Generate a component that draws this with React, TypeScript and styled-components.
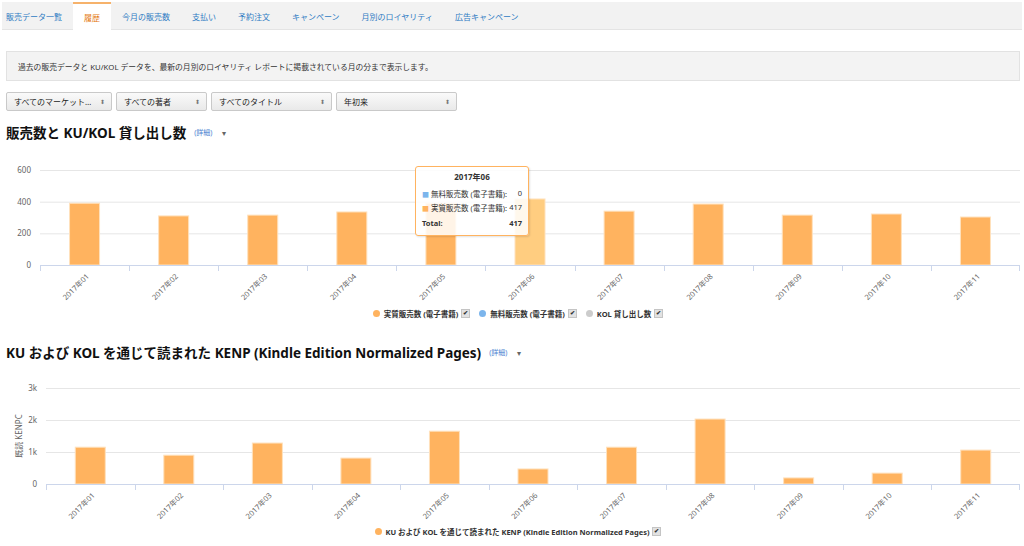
import React from 'react';
import styled, { createGlobalStyle } from 'styled-components';

const GlobalStyle = createGlobalStyle`
  html, body {
    margin: 0;
    padding: 0;
    background: #ffffff;
    font-family: "Noto Sans", "Noto Sans CJK JP", sans-serif;
    color: #333;
  }
`;

const tabs = ['販売データ一覧', '履歴', '今月の販売数', '支払い', '予約注文', 'キャンペーン', '月別のロイヤリティ', '広告キャンペーン'];
const months = ['01', '02', '03', '04', '05', '06', '07', '08', '09', '10', '11'].map(m => `2017年${m}`);
const salesData = [390, 310, 315, 335, 390, 417, 340, 385, 315, 322, 303];
const kenpData = [1150, 900, 1280, 810, 1650, 470, 1150, 2030, 190, 340, 1060];

interface ChartProps {
  values: number[];
  max: number;
  ticks: string[];
  height: number;
  plotTop: number;
  plotBottom: number;
  plotLeft: number;
  plotRight: number;
  labelX: number;
  yTitle?: string;
  highlight?: number;
}

function BarChart(props: ChartProps) {
  const { values, max, ticks, height, plotTop, plotBottom, plotLeft, plotRight, labelX, yTitle, highlight } = props;
  const step = (plotRight - plotLeft) / values.length;
  const plotH = plotBottom - plotTop;

  return (
    <ChartSvg width={1024} height={height} viewBox={`0 0 1024 ${height}`}>
      {ticks.map((t, i) => {
        const y = plotBottom - (plotH * i) / (ticks.length - 1);
        return (
          <g key={t}>
            {i > 0 && <line x1={plotLeft} x2={plotRight} y1={y + 0.5} y2={y + 0.5} stroke="#e6e6e6" />}
            <text x={labelX} y={y + 3} textAnchor="end" fontSize="8" fill="#666">
              {t}
            </text>
          </g>
        );
      })}
      {yTitle && (
        <text
          x={0}
          y={0}
          fontSize="8"
          fill="#666"
          textAnchor="middle"
          transform={`translate(22 ${(plotTop + plotBottom) / 2}) rotate(-90)`}
        >
          {yTitle}
        </text>
      )}
      {values.map((v, i) => {
        const cx = plotLeft + step * i + step / 2;
        const h = (v / max) * plotH;
        return (
          <rect
            key={i}
            x={cx - 15}
            y={plotBottom - h}
            width={30}
            height={h}
            fill={highlight === i ? '#ffcd80' : '#ffb35f'}
            stroke="#ffe1bd"
            strokeWidth={1}
          />
        );
      })}
      <line x1={plotLeft} x2={plotRight} y1={plotBottom + 0.5} y2={plotBottom + 0.5} stroke="#ccd6eb" />
      {values.map((_, i) => {
        const x = Math.round(plotLeft + step * i) + 0.5;
        return <line key={i} x1={x} x2={x} y1={plotBottom} y2={plotBottom + 6} stroke="#ccd6eb" />;
      })}
      <line
        x1={plotRight - 0.5}
        x2={plotRight - 0.5}
        y1={plotBottom}
        y2={plotBottom + 6}
        stroke="#ccd6eb"
      />
      {months.map((m, i) => {
        const cx = plotLeft + step * i + step / 2;
        return (
          <text
            key={m}
            x={0}
            y={0}
            fontSize="7.5"
            fill="#666"
            textAnchor="end"
            transform={`translate(${cx + 5} ${plotBottom + 12}) rotate(-45)`}
          >
            {m}
          </text>
        );
      })}
    </ChartSvg>
  );
}

function Legend(props: { items: { label: string; color: string }[] }) {
  return (
    <LegendRow>
      {props.items.map(item => (
        <LegendItem key={item.label}>
          <Dot color={item.color} />
          <span>{item.label}</span>
          <Check>✔</Check>
        </LegendItem>
      ))}
    </LegendRow>
  );
}

function App() {
  return (
    <Page>
      <GlobalStyle />
      <TabBar>
        {tabs.map((t, i) => (
          <Tab key={t} active={i === 1}>
            {t}
          </Tab>
        ))}
      </TabBar>
      <Content>
        <InfoBox>
          過去の販売データと KU/KOL データを、最新の月別のロイヤリティ レポートに掲載されている月の分まで表示します。
        </InfoBox>
        <Filters>
          <Select width={106}>すべてのマーケット…</Select>
          <Select width={91}>すべての著者</Select>
          <Select width={121}>すべてのタイトル</Select>
          <Select width={121}>年初来</Select>
        </Filters>
        <Heading>
          販売数と KU/KOL 貸し出し数
          <Detail>(詳細)</Detail>
          <Caret>▾</Caret>
        </Heading>
      </Content>
      <ChartBox top={8}>
        <BarChart
          values={salesData}
          max={600}
          ticks={['0', '200', '400', '600']}
          height={152}
          plotTop={20}
          plotBottom={115}
          plotLeft={40}
          plotRight={1020}
          labelX={31}
          highlight={5}
        />
        <Tooltip>
          <TipTitle>2017年06</TipTitle>
          <TipRow>
            <span>
              <Square color="#7cb5ec">■</Square> 無料販売数 (電子書籍):
            </span>
            <span>0</span>
          </TipRow>
          <TipRow>
            <span>
              <Square color="#ffb35f">■</Square> 実質販売数 (電子書籍):
            </span>
            <span>417</span>
          </TipRow>
          <TipRow bold>
            <span>Total:</span>
            <span>417</span>
          </TipRow>
        </Tooltip>
      </ChartBox>
      <Legend
        items={[
          { label: '実質販売数 (電子書籍)', color: '#ffb35f' },
          { label: '無料販売数 (電子書籍)', color: '#7cb5ec' },
          { label: 'KOL 貸し出し数', color: '#cccccc' },
        ]}
      />
      <Content>
        <Heading top={22}>
          KU および KOL を通じて読まれた KENP (Kindle Edition Normalized Pages)
          <Detail>(詳細)</Detail>
          <Caret>▾</Caret>
        </Heading>
      </Content>
      <ChartBox top={18}>
        <BarChart
          values={kenpData}
          max={3000}
          ticks={['0', '1k', '2k', '3k']}
          height={140}
          plotTop={8}
          plotBottom={104}
          plotLeft={46}
          plotRight={1020}
          labelX={37}
          yTitle="既読 KENPC"
        />
      </ChartBox>
      <LegendSpacer>
        <Legend
          items={[{ label: 'KU および KOL を通じて読まれた KENP (Kindle Edition Normalized Pages)', color: '#ffb35f' }]}
        />
      </LegendSpacer>
    </Page>
  );
}

const Page = styled.div`
  width: 1024px;
  height: 546px;
  overflow: hidden;
`;

const TabBar = styled.div`
  display: flex;
  align-items: stretch;
  height: 27px;
  margin: 2px 2px 0 2px;
  background: #f2f2f2;
  border-bottom: 1px solid #e4e4e4;
`;

const Tab = styled.div<{ active?: boolean }>`
  display: flex;
  align-items: center;
  padding: 0 11px;
  font-size: 8px;
  color: ${p => (p.active ? '#e47911' : '#2f7bc3')};
  background: ${p => (p.active ? '#ffffff' : 'transparent')};
  border-top: 2px solid ${p => (p.active ? '#f6b26b' : 'transparent')};
  margin-bottom: ${p => (p.active ? '-1px' : '0')};
  &:first-child {
    padding-left: 4px;
  }
`;

const Content = styled.div`
  padding: 0 4px 0 6px;
`;

const InfoBox = styled.div`
  margin-top: 21px;
  height: 28px;
  display: flex;
  align-items: center;
  padding-left: 11px;
  background: #f3f3f3;
  border: 1px solid #e2e2e2;
  font-size: 7.8px;
  color: #333;
`;

const Filters = styled.div`
  display: flex;
  gap: 4px;
  margin-top: 11px;
`;

const Select = styled.div<{ width: number }>`
  position: relative;
  width: ${p => p.width}px;
  height: 19px;
  box-sizing: border-box;
  display: flex;
  align-items: center;
  padding-left: 7px;
  font-size: 8px;
  color: #222;
  border: 1px solid #c9c9c9;
  border-radius: 2px;
  background: linear-gradient(#fafafa, #e9e9e9);
  &::after {
    content: '⬍';
    position: absolute;
    right: 6px;
    font-size: 6px;
    color: #777;
  }
`;

const Heading = styled.h2<{ top?: number }>`
  margin: ${p => p.top ?? 11}px 0 0 0;
  height: 20px;
  display: flex;
  align-items: center;
  font-size: 13.5px;
  font-weight: 700;
  color: #111;
`;

const Detail = styled.span`
  margin-left: 8px;
  font-size: 7px;
  font-weight: 400;
  color: #4a7fd0;
`;

const Caret = styled.span`
  margin-left: 10px;
  font-size: 8px;
  font-weight: 400;
  color: #666;
`;

const ChartBox = styled.div<{ top: number }>`
  position: relative;
  margin-top: ${p => p.top}px;
`;

const ChartSvg = styled.svg`
  display: block;
  overflow: visible;
  font-family: "Noto Sans", "Noto Sans CJK JP", sans-serif;
`;

const Tooltip = styled.div`
  position: absolute;
  left: 415px;
  top: 16px;
  width: 114px;
  box-sizing: border-box;
  padding: 4px 6px 5px 6px;
  background: rgba(255, 255, 255, 0.85);
  border: 1px solid #ffb35f;
  border-radius: 3px;
  box-shadow: 1px 1px 2px rgba(0, 0, 0, 0.12);
  font-size: 7.5px;
  color: #333;
`;

const TipTitle = styled.div`
  text-align: center;
  font-weight: 700;
  font-size: 8px;
  margin-bottom: 4px;
`;

const TipRow = styled.div<{ bold?: boolean }>`
  display: flex;
  justify-content: space-between;
  height: 14px;
  align-items: center;
  font-weight: ${p => (p.bold ? 700 : 400)};
  margin-top: ${p => (p.bold ? '2px' : '0')};
`;

const Square = styled.span<{ color: string }>`
  color: ${p => p.color};
  font-size: 7px;
`;

const LegendRow = styled.div`
  display: flex;
  justify-content: center;
  gap: 9px;
  margin-top: 4px;
  height: 14px;
  align-items: center;
  padding-left: 12px;
`;

const LegendItem = styled.div`
  display: flex;
  align-items: center;
  font-size: 7.5px;
  font-weight: 700;
  color: #333;
`;

const Dot = styled.span<{ color: string }>`
  width: 7px;
  height: 7px;
  border-radius: 50%;
  background: ${p => p.color};
  margin-right: 4px;
`;

const Check = styled.span`
  width: 7px;
  height: 7px;
  margin-left: 3px;
  display: flex;
  align-items: center;
  justify-content: center;
  font-size: 6px;
  color: #333;
  background: #e2e2e2;
  border: 1px solid #c4c4c4;
`;

const LegendSpacer = styled.div`
  margin-top: 1px;
`;

export default App;
